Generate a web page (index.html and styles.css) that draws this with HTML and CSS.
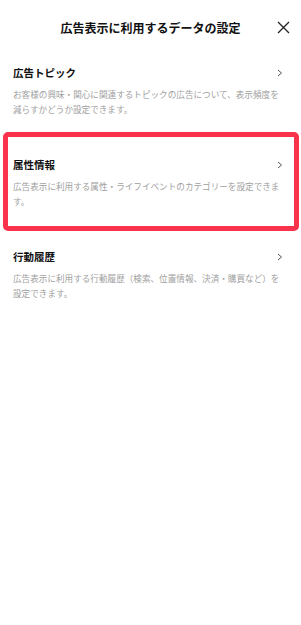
FILE: index.html
```html
<!DOCTYPE html>
<html lang="ja">
<head>
  <meta charset="UTF-8">
  <meta name="viewport" content="width=device-width,initial-scale=1.0">
  <title>広告表示に利用するデータの設定</title>
  <link rel="stylesheet" href="styles.css">
</head>
<body>
    <div class="header">
        <div></div>
        <div class="title">広告表示に利用するデータの設定</div>
        <button class="close" aria-label="閉じる">
            <svg width="13" height="13" viewBox="0 0 13 13">
                <path d="M1 1 L12 12 M12 1 L1 12" stroke="#222" stroke-width="1.3" fill="none"/>
            </svg>
        </button>
    </div>

    <div class="list">
        <div class="item">
            <div class="item-head">
                <div class="item-title">広告トピック</div>
                <svg class="chevron" width="6" height="8" viewBox="0 0 6 8">
                    <polyline points="1,1 4.5,4 1,7" stroke="#555" stroke-width="1" fill="none"/>
                </svg>
            </div>
            <div class="item-desc">お客様の興味・関心に関連するトピックの広告について、表示頻度を減らすかどうか設定できます。</div>
        </div>

        <div class="item highlight">
            <div class="item-head">
                <div class="item-title">属性情報</div>
                <svg class="chevron" width="6" height="8" viewBox="0 0 6 8">
                    <polyline points="1,1 4.5,4 1,7" stroke="#555" stroke-width="1" fill="none"/>
                </svg>
            </div>
            <div class="item-desc">広告表示に利用する属性・ライフイベントのカテゴリーを設定できます。</div>
        </div>

        <div class="item">
            <div class="item-head">
                <div class="item-title">行動履歴</div>
                <svg class="chevron" width="6" height="8" viewBox="0 0 6 8">
                    <polyline points="1,1 4.5,4 1,7" stroke="#555" stroke-width="1" fill="none"/>
                </svg>
            </div>
            <div class="item-desc">広告表示に利用する行動履歴（検索、位置情報、決済・購買など）を設定できます。</div>
        </div>
    </div>
</body>
</html>
```

FILE: styles.css
```css
html {
    height: 100%;
}
body {
    margin: 0;
    background-color: #fff;
    font-family: "Noto Sans CJK JP", "Noto Sans", sans-serif;
    color: #111;
}
.header {
    display: grid;
    grid-template-columns: 1fr auto 1fr;
    align-items: center;
    height: 44px;
    margin-top: 5px;
}
.title {
    font-size: 12px;
    font-weight: bold;
    white-space: nowrap;
}
.close {
    justify-self: end;
    display: flex;
    padding: 0;
    margin-right: 11px;
    border: none;
    background: none;
}
.item {
    padding: 15px 18px 25px 13px;
}
.item-head {
    display: flex;
    align-items: center;
    justify-content: space-between;
    height: 17px;
}
.item-title {
    font-size: 10.5px;
    font-weight: bold;
    line-height: 17px;
}
.chevron {
    margin-top: 1px;
}
.item-desc {
    margin-top: 6px;
    font-size: 8.6px;
    line-height: 14.5px;
    color: #a0a0a0;
}
.highlight {
    position: relative;
}
.highlight::after {
    content: "";
    position: absolute;
    top: -9px;
    bottom: 2px;
    left: 3px;
    right: 2px;
    border: 5px solid #f8334b;
    border-radius: 5px;
    pointer-events: none;
}
```
